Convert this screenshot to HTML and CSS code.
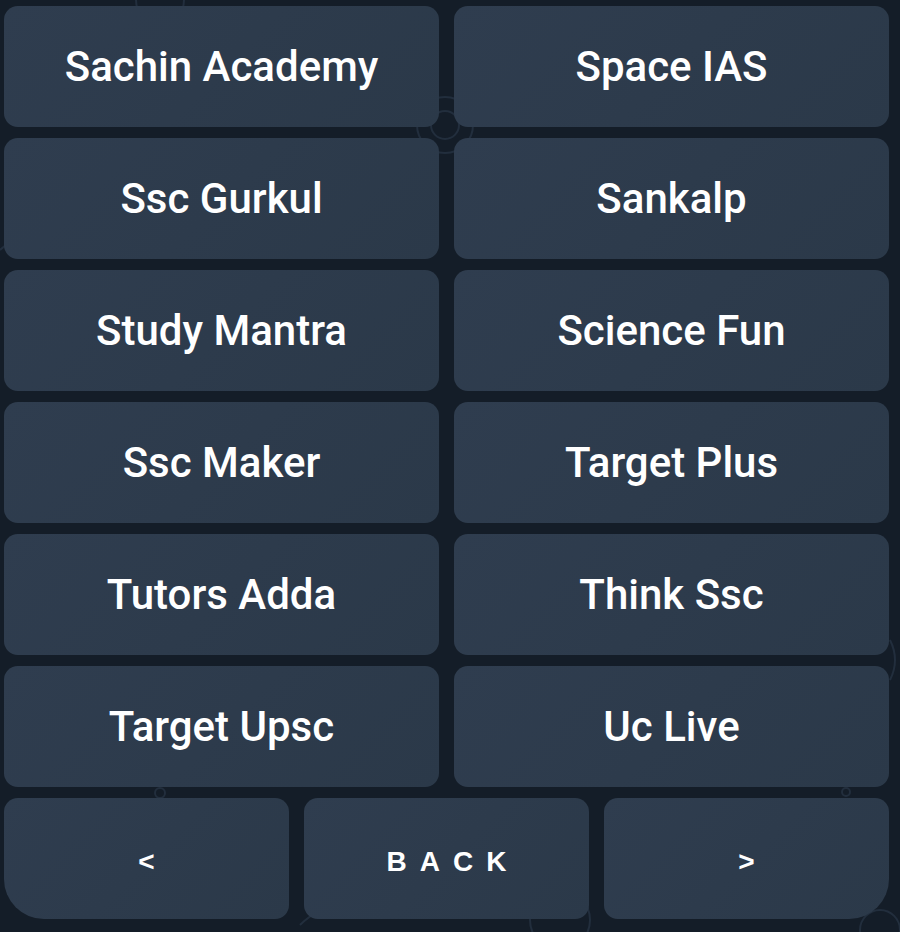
FILE: index.html
```html
<!DOCTYPE html>
<html>
<head>
<meta charset="utf-8">
<link rel="stylesheet" href="styles.css">
</head>
<body>
<svg class="pattern" width="900" height="932" viewBox="0 0 900 932" aria-hidden="true">
  <g fill="none" stroke="#222e3d" stroke-width="2">
    <circle cx="445" cy="125" r="28"/>
    <circle cx="445" cy="125" r="14"/>
    <circle cx="160" cy="0" r="24"/>
    <circle cx="560" cy="920" r="30"/>
    <circle cx="880" cy="930" r="20"/>
    <path d="M300 925 q30 -30 70 -10"/>
    <path d="M710 780 q20 10 40 -5"/>
    <circle cx="846" cy="792" r="4"/>
    <circle cx="160" cy="793" r="5"/>
    <path d="M0 250 q20 -20 40 0"/>
    <path d="M890 640 q10 20 0 40"/>
  </g>
</svg>
<div class="keyboard">
  <div class="grid two">
    <button class="key">Sachin Academy</button>
    <button class="key">Space IAS</button>
    <button class="key">Ssc Gurkul</button>
    <button class="key">Sankalp</button>
    <button class="key">Study Mantra</button>
    <button class="key">Science Fun</button>
    <button class="key">Ssc Maker</button>
    <button class="key">Target Plus</button>
    <button class="key">Tutors Adda</button>
    <button class="key">Think Ssc</button>
    <button class="key">Target Upsc</button>
    <button class="key">Uc Live</button>
  </div>
  <div class="grid three">
    <button class="key nav first">&lt;</button>
    <button class="key nav back">BACK</button>
    <button class="key nav last">&gt;</button>
  </div>
</div>
</body>
</html>
```
FILE: styles.css
```css
html, body {
  margin: 0;
  padding: 0;
  width: 900px;
  height: 932px;
  background: #141d28;
  overflow: hidden;
}
.pattern {
  position: absolute;
  left: 0;
  top: 0;
  z-index: 0;
}
.keyboard {
  position: relative;
  z-index: 1;
  padding: 6px 11px 13px 4px;
  display: flex;
  flex-direction: column;
  gap: 11px;
}
.grid {
  display: grid;
  column-gap: 15px;
  row-gap: 11px;
}
.two {
  grid-template-columns: 1fr 1fr;
}
.three {
  grid-template-columns: 1fr 1fr 1fr;
}
.key {
  height: 121px;
  border: none;
  border-radius: 14px;
  background: linear-gradient(135deg, #2f3d4f 0%, #2b3949 100%);
  color: #ffffff;
  font-family: Roboto, "Noto Sans", sans-serif;
  font-weight: 500;
  font-size: 42px;
  padding: 0;
  margin: 0;
  display: flex;
  align-items: center;
  justify-content: center;
}
.nav {
  font-family: "Liberation Sans", Arial, sans-serif;
  font-weight: 700;
  font-size: 28px;
  padding-top: 6px;
}
.back {
  letter-spacing: 13px;
  padding-left: 13px;
}
.first {
  border-bottom-left-radius: 40px;
}
.last {
  border-bottom-right-radius: 40px;
}
```
